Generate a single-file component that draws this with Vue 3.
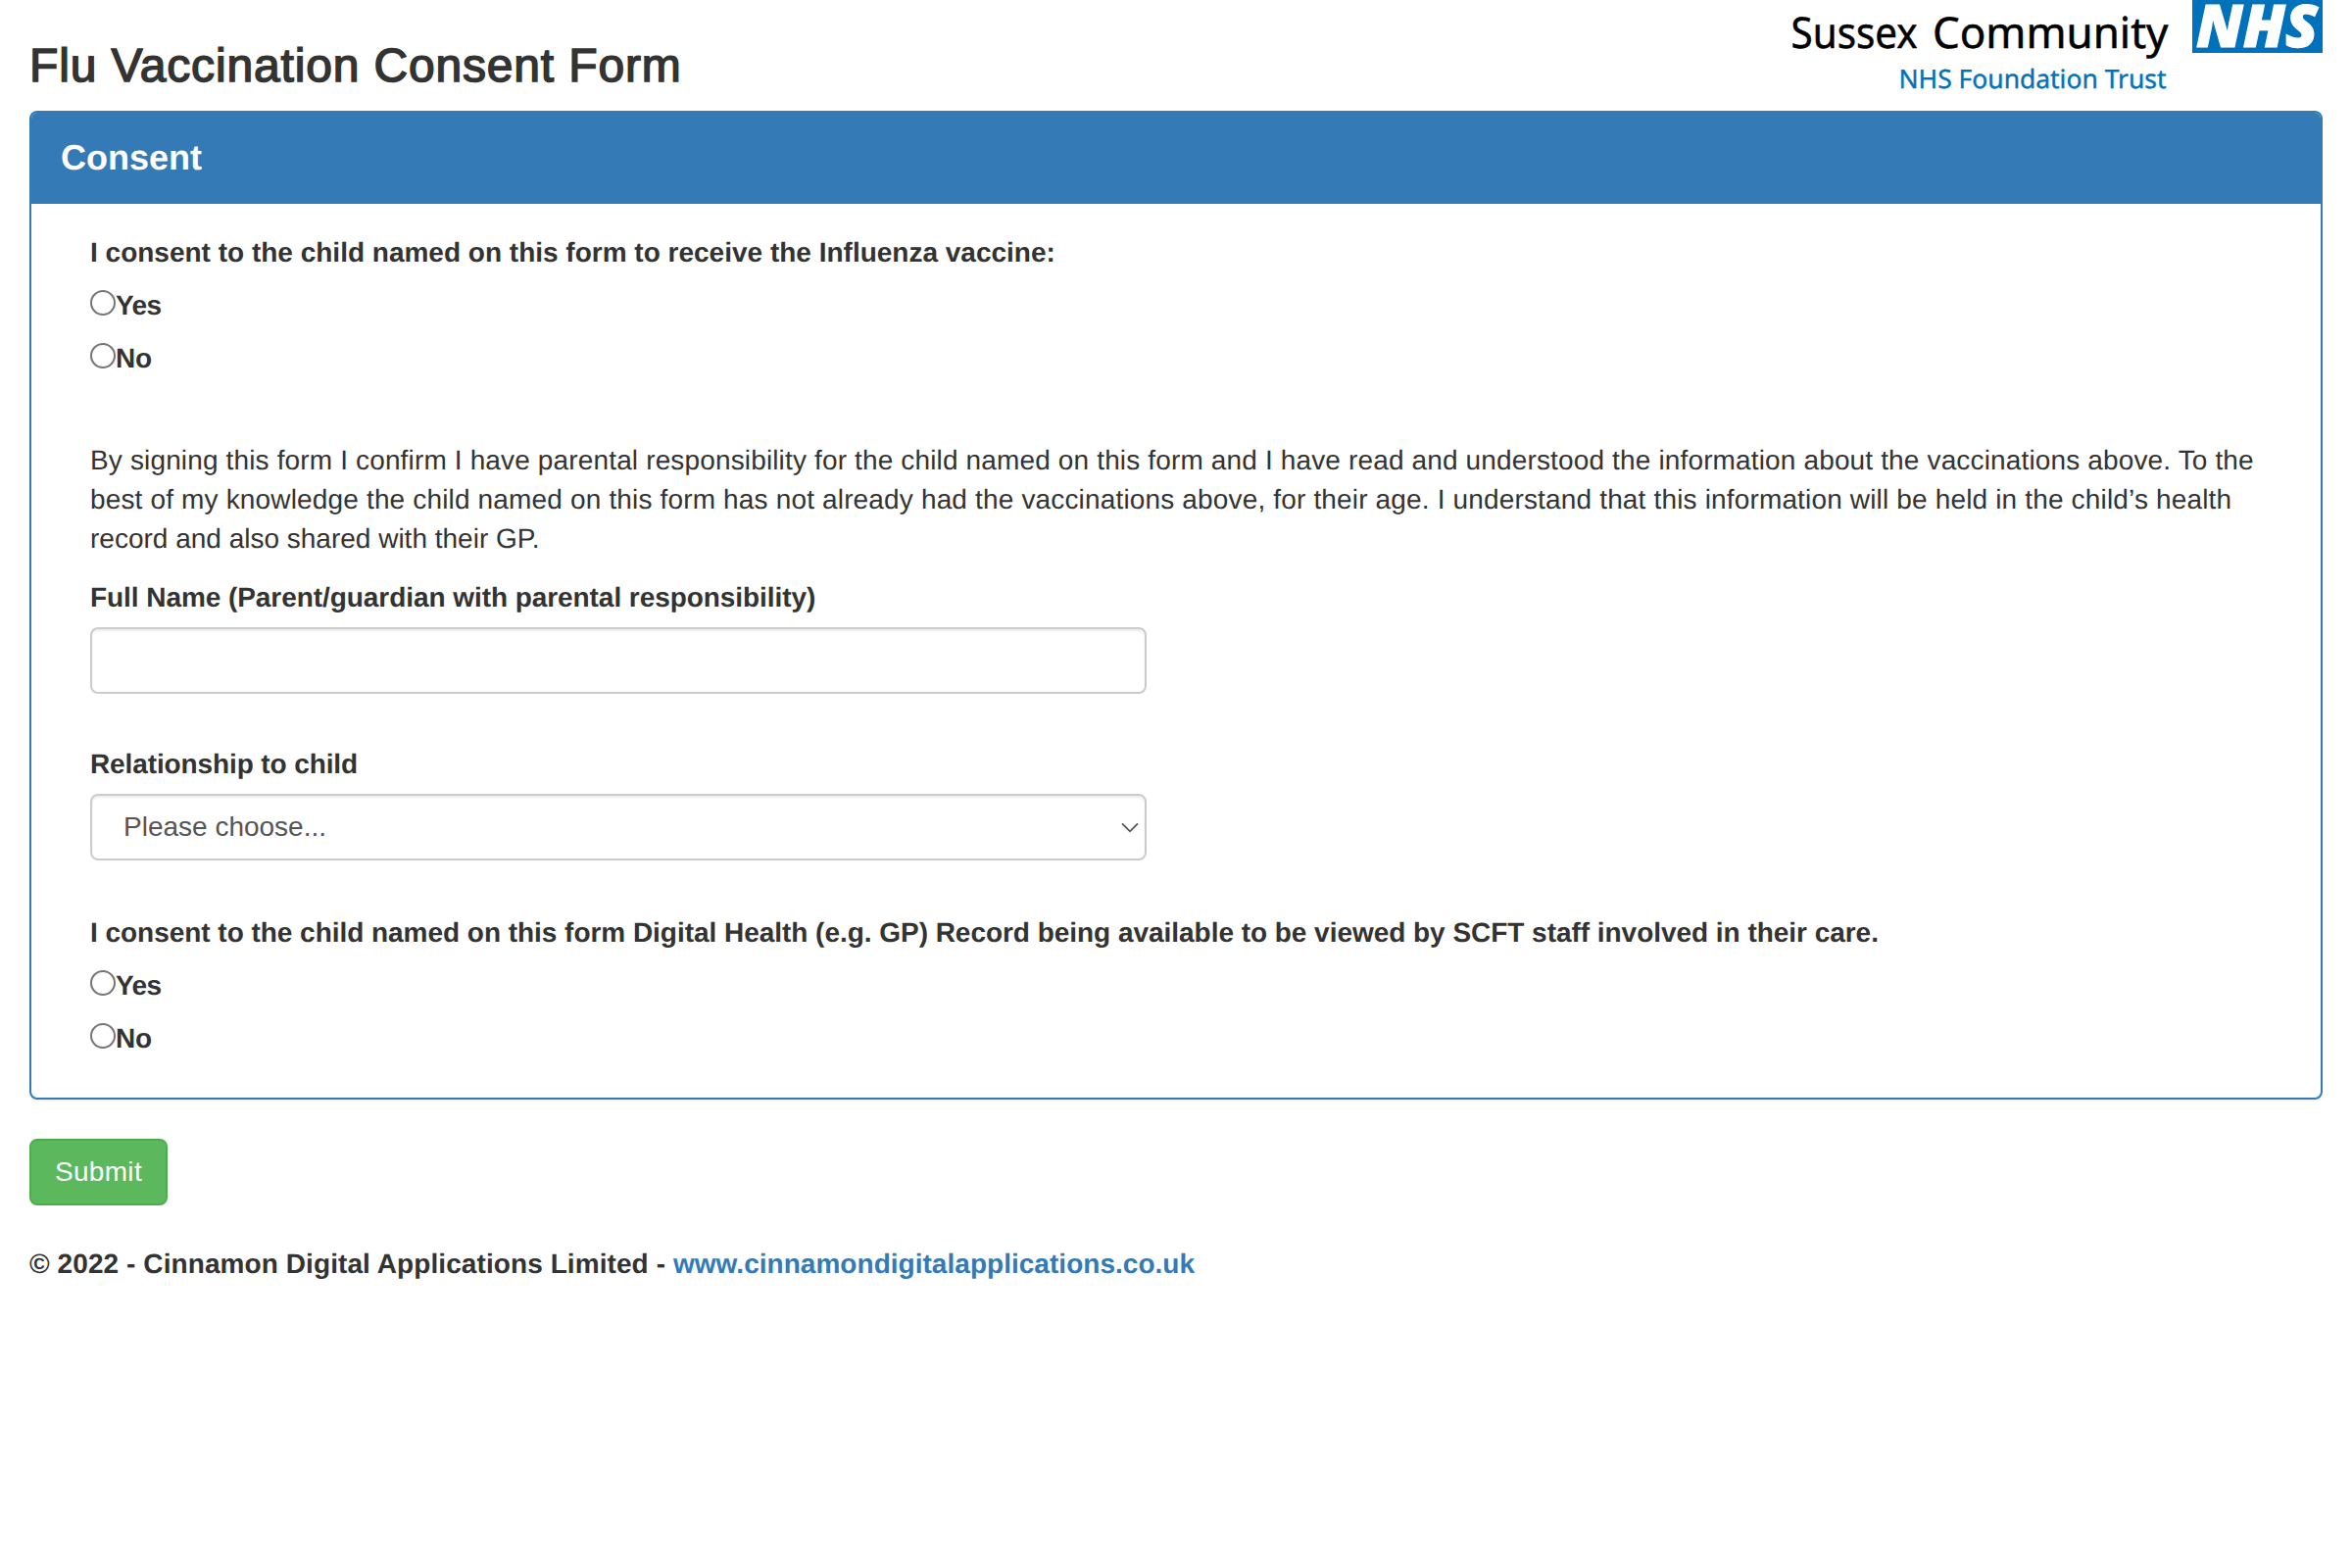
<script setup>
import { ref } from 'vue'

const vaccineConsent = ref('')
const recordConsent = ref('')
const fullName = ref('')
const relationship = ref('')
const options = ['Yes', 'No']
</script>

<template>
  <div class="page">
    <header class="masthead">
      <h1 class="title">Flu Vaccination Consent Form</h1>
      <svg class="logo" width="560" height="100" viewBox="0 0 560 100" role="img" aria-label="Sussex Community NHS Foundation Trust">
        <text class="trust-name" x="17.6" y="49.3" textLength="129" lengthAdjust="spacingAndGlyphs">Sussex</text>
        <text class="trust-name" x="162" y="49.3" textLength="240.5" lengthAdjust="spacingAndGlyphs">Community</text>
        <text class="trust-type" x="127.5" y="89.6" textLength="273" lengthAdjust="spacingAndGlyphs">NHS Foundation Trust</text>
        <rect x="427" y="0" width="133" height="54" fill="#0072bc" />
        <text class="lozenge" x="431" y="48.3" textLength="124" lengthAdjust="spacingAndGlyphs">NHS</text>
      </svg>
    </header>

    <form @submit.prevent>
      <section class="panel">
        <h2 class="panel-heading">Consent</h2>
        <div class="panel-body">
          <div class="group">
            <p class="label">I consent to the child named on this form to receive the Influenza vaccine:</p>
            <label v-for="o in options" :key="o" class="option" :class="o.toLowerCase()">
              <input v-model="vaccineConsent" type="radio" name="vaccine" :value="o"><span>{{ o }}</span>
            </label>
          </div>

          <p class="statement">
            <span class="line first">By signing this form I confirm I have parental responsibility for the child named on this form and I have read and understood the information about the vaccinations above. To the</span>
            <span class="line second">best of my knowledge the child named on this form has not already had the vaccinations above, for their age. I understand that this information will be held in the child’s health</span>
            <span class="line">record and also shared with their GP.</span>
          </p>

          <div class="field">
            <label class="label name-label" for="name">Full Name (Parent/guardian with parental responsibility)</label>
            <input id="name" v-model="fullName" class="control" type="text">
          </div>

          <div class="field">
            <label class="label relation-label" for="relation">Relationship to child</label>
            <div class="select-wrap">
              <select id="relation" v-model="relationship" class="control">
                <option value="">Please choose...</option>
              </select>
              <svg class="chevron" width="18" height="12" viewBox="0 0 18 12"><path d="M1 1.3 9 9.3 17 1.3" fill="none" stroke="#555" stroke-width="1.8" /></svg>
            </div>
          </div>

          <div class="group last">
            <p class="label record-label">I consent to the child named on this form Digital Health (e.g. GP) Record being available to be viewed by SCFT staff involved in their care.</p>
            <label v-for="o in options" :key="o" class="option" :class="o.toLowerCase()">
              <input v-model="recordConsent" type="radio" name="record" :value="o"><span>{{ o }}</span>
            </label>
          </div>
        </div>
      </section>
      <button class="submit" type="submit">Submit</button>
    </form>

    <footer class="footer"><span class="copyright">© 2022 - Cinnamon Digital Applications Limited - </span><a href="#">www.cinnamondigitalapplications.co.uk</a></footer>
  </div>
</template>

<style>
body { background: #fff; }
</style>

<style scoped>
.page {
  box-sizing: border-box;
  min-height: 1600px;
  padding: 0 30px;
  font: 28px/40px "Liberation Sans", Arial, sans-serif;
  color: #333;
  text-rendering: geometricPrecision;
}
.page * { box-sizing: border-box; }
.masthead {
  display: flex;
  justify-content: space-between;
  height: 113px;
}
.title {
  margin: 41px 0 0;
  font-size: 48px;
  font-weight: 400;
  line-height: 53px;
  letter-spacing: 0.84px;
  -webkit-text-stroke: 1.5px #333;
  white-space: nowrap;
}
.logo { display: block; }
.trust-name { font: 44px "Noto Sans", sans-serif; fill: #000; stroke: #000; stroke-width: 0.5px; }
.trust-type { font: 26.5px "Noto Sans", sans-serif; fill: #0072bc; stroke: #0072bc; stroke-width: 0.4px; }
.lozenge { font: italic 800 60px "Open Sans", sans-serif; fill: #fff; stroke: #fff; stroke-width: 1.2px; }
.panel {
  height: 1009px;
  border: 2px solid #337ab7;
  border-radius: 8px;
  box-shadow: 0 2px 2px rgba(0, 0, 0, 0.05);
}
.panel-heading {
  height: 93px;
  margin: 0;
  padding: 26px 30px 0;
  border-radius: 6px 6px 0 0;
  background: #337ab7;
  color: #fff;
  font-size: 36px;
  font-weight: 700;
  line-height: 40px;
}
.panel-body { padding: 30px 60px 0; }
.group { padding-bottom: 64px; }
.group.last { padding-bottom: 0; }
.label {
  display: block;
  margin: 0;
  font-weight: 700;
  white-space: nowrap;
}
.name-label { letter-spacing: -0.061px; }
.relation-label { letter-spacing: -0.11px; }
.record-label { letter-spacing: -0.034px; }
.option {
  display: flex;
  align-items: flex-start;
  width: max-content;
  height: 40px;
  margin-top: 14px;
  font-weight: 700;
}
.yes { letter-spacing: -0.6px; }
.no { letter-spacing: -0.1px; }
.option input {
  appearance: none;
  width: 26px;
  height: 26px;
  margin: 4px 0 0;
  border: 2px solid #767676;
  border-radius: 50%;
  background: #fff;
}
.option input:checked { box-shadow: inset 0 0 0 5px #fff; background: #337ab7; }
.statement { margin: 0 0 20px; }
.line { display: block; white-space: nowrap; }
.first { letter-spacing: 0.147px; }
.second { letter-spacing: 0.16px; }
.field { margin-bottom: 52px; }
.field + .field { margin-bottom: 54px; }
.control {
  display: block;
  width: 1078px;
  height: 68px;
  margin: 10px 0 0;
  padding: 12px 32px;
  border: 2px solid #ccc;
  border-radius: 8px;
  background: #fff;
  box-shadow: inset 0 2px 2px rgba(0, 0, 0, 0.075);
  color: #555;
  font: inherit;
  line-height: 40px;
  appearance: none;
  outline: none;
}
.select-wrap { position: relative; width: 1078px; }
.chevron { position: absolute; top: 29px; right: 8px; pointer-events: none; }
.submit {
  display: block;
  width: 141px;
  height: 68px;
  margin: 40px 0;
  padding: 0;
  border: 2px solid #4cae4c;
  border-radius: 8px;
  background: #5cb85c;
  color: #fff;
  font: inherit;
  line-height: 40px;
  letter-spacing: 0.3px;
}
.footer { font-weight: 700; white-space: nowrap; }
.copyright { letter-spacing: 0.085px; white-space: pre; }
.footer a { color: #337ab7; letter-spacing: 0.03px; text-decoration: none; }
</style>
